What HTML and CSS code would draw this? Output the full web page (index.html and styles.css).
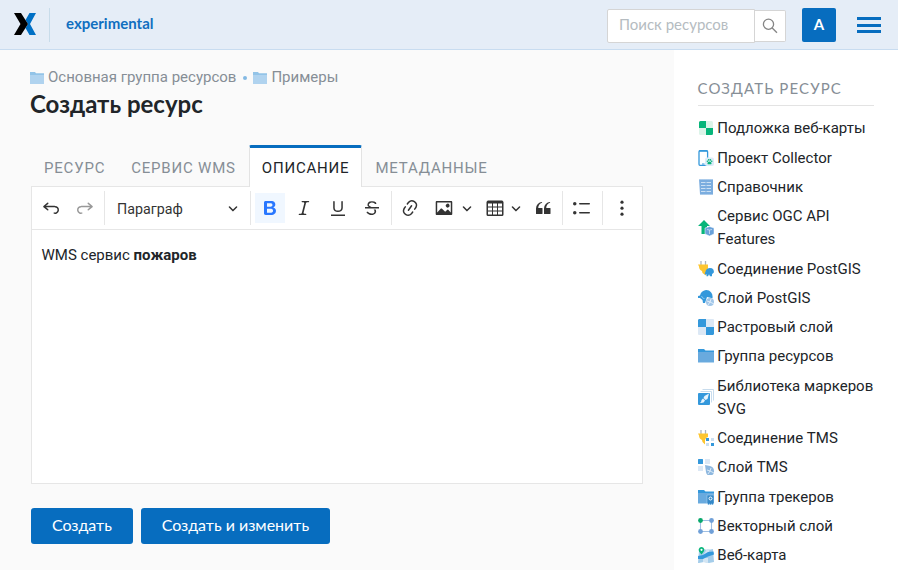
FILE: index.html
```html
<!DOCTYPE html>
<html lang="ru">
<head>
<meta charset="utf-8">
<title>Создать ресурс</title>
<link rel="stylesheet" href="styles.css">
</head>
<body>
<header class="header">
  <svg class="logo" viewBox="0 0 22 22"><path fill="#0070c5" d="M15.500 0H22L16 11l6 11h-6.500L11.500 15 14 11l-2.500-4z"/><path d="M0 0h7l7 11-7 11H0l6.500-11z"/></svg>
  <a class="site">experimental</a>
  <div class="search"><span class="search-input">Поиск ресурсов</span><span class="search-button"><svg viewBox="0 0 16 16" width="16" height="16" fill="none" stroke="#858585" stroke-width="1.300"><circle cx="6.500" cy="6.200" r="5.100"/><path d="M10.200 10l4.800 4.800"/></svg></span></div>
  <span class="avatar">A</span>
  <span class="burger"><i></i><i></i><i></i></span>
</header>
<div class="page">
  <main class="main">
    <nav class="crumbs">
      <svg viewBox="0 0 14 12"><path fill="#93c4e8" d="M0 0h5l1 1.200h8V4H0z"/><path fill="#b0d3ef" d="M0 3h14v9H0z"/></svg><span>Основная группа ресурсов</span><i class="dot"></i>
      <svg viewBox="0 0 14 12"><path fill="#93c4e8" d="M0 0h5l1 1.200h8V4H0z"/><path fill="#b0d3ef" d="M0 3h14v9H0z"/></svg><span>Примеры</span>
    </nav>
    <h1>Создать ресурс</h1>
    <div class="tabs"><span class="tab">Ресурс</span><span class="tab">Сервис WMS</span><span class="tab active">Описание</span><span class="tab">Метаданные</span></div>
    <section class="editor">
      <div class="toolbar">
        <span class="btn"><svg viewBox="0 0 20 20"><path d="m5.042 9.367 2.189 1.837a.75.75 0 0 1-.965 1.149l-3.788-3.180a.747.747 0 0 1-.210-.284.75.75 0 0 1 .170-.945L6.230 4.762a.75.75 0 1 1 .964 1.150L4.863 7.866h8.917A.75.75 0 0 1 14 7.900a4 4 0 1 1-1.477 7.718l.344-1.489a2.500 2.500 0 1 0 1.094-4.730l.008-.032H5.042z"/></svg></span>
        <span class="btn off"><svg viewBox="0 0 20 20"><path transform="matrix(-1 0 0 1 20 0)" d="m5.042 9.367 2.189 1.837a.75.75 0 0 1-.965 1.149l-3.788-3.180a.747.747 0 0 1-.210-.284.75.75 0 0 1 .170-.945L6.230 4.762a.75.75 0 1 1 .964 1.150L4.863 7.866h8.917A.75.75 0 0 1 14 7.900a4 4 0 1 1-1.477 7.718l.344-1.489a2.500 2.500 0 1 0 1.094-4.730l.008-.032H5.042z"/></svg></span>
        <i class="sep"></i>
        <span class="heading">Параграф<svg class="arrow" viewBox="0 0 10 10"><path d="M.941 4.523a.75.75 0 1 1 1.060-1.060l3.006 3.005 3.005-3.005a.75.75 0 1 1 1.060 1.060l-3.549 3.550a.75.75 0 0 1-1.168-.136L.941 4.523z"/></svg></span>
        <i class="sep"></i>
        <span class="btn on"><svg viewBox="0 0 20 20"><path d="M10.187 17H5.773c-.637 0-1.092-.138-1.364-.415-.273-.277-.409-.718-.409-1.323V4.738c0-.617.140-1.062.419-1.332.279-.270.730-.406 1.354-.406h4.680c.690 0 1.288.041 1.793.124.506.083.960.242 1.360.478.341.197.644.447.906.750a3.262 3.262 0 0 1 .808 2.162c0 1.401-.722 2.426-2.167 3.075C15.050 10.175 16 11.315 16 13.010a3.756 3.756 0 0 1-2.296 3.504 6.100 6.100 0 0 1-1.517.377c-.571.073-1.238.110-2 .110zm-.217-6.217H7v4.087h3.069c1.977 0 2.965-.690 2.965-2.072 0-.707-.256-1.220-.768-1.537-.512-.319-1.277-.478-2.296-.478zM7 5.130v3.619h2.606c.729 0 1.292-.067 1.690-.200a1.600 1.600 0 0 0 .910-.765c.165-.267.247-.566.247-.897 0-.707-.260-1.176-.778-1.409-.519-.232-1.310-.348-2.375-.348H7z"/></svg></span>
        <span class="btn"><svg viewBox="0 0 20 20"><path d="m9.586 14.633.021.004c-.036.335.095.655.393.962.082.083.173.150.274.201h1.474a.6.6 0 1 1 0 1.200H5.304a.6.6 0 0 1 0-1.200h1.150c.474-.070.809-.182 1.005-.334.157-.122.291-.320.404-.597l2.416-9.550a1.053 1.053 0 0 0-.281-.823 1.120 1.120 0 0 0-.442-.296H8.150a.6.6 0 0 1 0-1.200h6.443a.6.6 0 1 1 0 1.200h-1.195c-.376.056-.650.155-.823.296-.215.175-.423.439-.623.790l-2.366 9.347z"/></svg></span>
        <span class="btn"><svg viewBox="0 0 20 20"><path d="M3 18v-1.500h14V18zM5.200 10V3.600c0-.4.4-.6.8-.6.3 0 .7.2.7.6v6.200c0 2 1.300 2.800 3.200 2.800 1.900 0 3.400-.9 3.400-2.900V3.600c0-.3.4-.5.8-.5.3 0 .7.2.7.5V10c0 2.700-2.200 4-4.900 4-2.600 0-4.700-1.200-4.700-4z"/></svg></span>
        <span class="btn"><svg viewBox="0 0 20 20"><path d="M7 16.400c-.8-.4-1.500-.9-2.200-1.500a.6.6 0 0 1-.2-.5l.3-.6h1c1 1.200 2.100 1.700 3.700 1.700 1 0 1.800-.3 2.300-.6.6-.4.6-1.200.6-1.300.2-1.200-.9-2.100-.9-2.100h2.100c.3.7.4 1.200.4 1.700v.8l-.6 1.200c-.6.8-1.100 1-1.600 1.200a6 6 0 0 1-2.400.6c-1 0-1.800-.3-2.500-.6zM6.800 9L6 8.300c-.4-.5-.5-.8-.5-1.600 0-.7.1-1.300.5-1.800.4-.6 1-1 1.600-1.300a6.300 6.300 0 0 1 4.700 0 4 4 0 0 1 1.700 1l.3.7c0 .1.2.4-.2.7-.4.2-.9.1-1 0a3 3 0 0 0-1.200-1c-.4-.2-1-.3-2-.4-.7 0-1.400.2-2 .6-.8.6-1 .8-1 1.500 0 .8.5 1 1.200 1.500.6.4 1.100.7 1.900 1H6.800zM3 10.500V9h14v1.500z"/></svg></span>
        <i class="sep"></i>
        <span class="btn link"><svg viewBox="0 0 20 20"><path d="m11.077 15 .991-1.416a.75.75 0 1 1 1.229.860l-1.148 1.640a.748.748 0 0 1-.217.206 5.251 5.251 0 0 1-8.503-5.955.741.741 0 0 1 .120-.274l1.147-1.639a.75.75 0 1 1 1.228.860L4.933 10.700l.006.003a3.750 3.750 0 0 0 6.132 4.294l.006.004zm5.494-5.335a.748.748 0 0 1-.120.274l-1.147 1.639a.75.75 0 1 1-1.228-.860l.860-1.230a3.750 3.750 0 0 0-6.144-4.301l-.860 1.229a.75.75 0 0 1-1.229-.860l1.148-1.640a.748.748 0 0 1 .217-.206 5.251 5.251 0 0 1 8.503 5.955zm-4.563-2.532a.75.75 0 0 1 .184 1.045l-3.155 4.505a.75.75 0 1 1-1.229-.860l3.155-4.506a.75.75 0 0 1 1.045-.184z"/></svg></span>
        <span class="split image"><span class="btn"><svg viewBox="0 0 20 20"><path d="M6.910 10.540c.260-.230.640-.210.880.030l3.360 3.140 2.230-2.060a.64.64 0 0 1 .870 0l2.520 2.970V4.500H3.200v10.120l3.710-4.080zm10.270-7.510c.6 0 1.090.470 1.090 1.050v11.840c0 .590-.490 1.060-1.090 1.060H2.790c-.6 0-1.090-.470-1.090-1.060V4.080c0-.580.490-1.050 1.100-1.050h14.380zm-5.220 5.560a1.960 1.960 0 1 1 3.400-1.960 1.960 1.960 0 0 1-3.400 1.960z"/></svg></span><svg class="arrow" viewBox="0 0 10 10"><path d="M.941 4.523a.75.75 0 1 1 1.060-1.060l3.006 3.005 3.005-3.005a.75.75 0 1 1 1.060 1.060l-3.549 3.550a.75.75 0 0 1-1.168-.136L.941 4.523z"/></svg></span>
        <span class="split"><span class="btn"><svg viewBox="0 0 20 20"><path d="M3 5.500v3h4v-3H3zm0 4v3h4v-3H3zm0 4v3h4v-3H3zm5 3h4v-3H8v3zm5 0h4v-3h-4v3zm4-4v-3h-4v3h4zm0-4v-3h-4v3h4zm1.500 8a1.500 1.500 0 0 1-1.500 1.500H3A1.500 1.500 0 0 1 1.500 16.500V4c.222-.863 1.068-1.500 2-1.500h13c.932 0 1.778.637 2 1.500v12.500zM12 12.500v-3H8v3h4zm0-4v-3H8v3h4z"/></svg></span><svg class="arrow" viewBox="0 0 10 10"><path d="M.941 4.523a.75.75 0 1 1 1.060-1.060l3.006 3.005 3.005-3.005a.75.75 0 1 1 1.060 1.060l-3.549 3.550a.75.75 0 0 1-1.168-.136L.941 4.523z"/></svg></span>
        <span class="btn"><svg viewBox="0 0 20 20"><path d="M3 10.423a6.500 6.500 0 0 1 6.056-6.408l.038.670C6.448 5.423 5.354 7.663 5.220 10H9c.552 0 .5.432.5.986v4.511c0 .554-.448.503-1 .503h-5c-.552 0-.5-.449-.5-1.003v-4.574zm8 0a6.500 6.500 0 0 1 6.056-6.408l.038.670c-2.646.739-3.740 2.979-3.873 5.315H17c.552 0 .5.432.5.986v4.511c0 .554-.448.503-1 .503h-5c-.552 0-.5-.449-.5-1.003v-4.574z"/></svg></span>
        <i class="sep"></i>
        <span class="btn"><svg viewBox="0 0 20 20"><path d="M7 5.750c0 .414.336.750.750.750h9.500a.75.75 0 1 0 0-1.500h-9.500a.75.75 0 0 0-.750.750zM7 14.750c0 .414.336.750.750.750h9.500a.75.75 0 1 0 0-1.500h-9.500a.75.75 0 0 0-.750.750z"/><circle cx="2.750" cy="5.750" r="1.750"/><circle cx="2.750" cy="14.750" r="1.750"/></svg></span>
        <i class="sep last"></i>
        <span class="btn"><svg viewBox="0 0 20 20"><circle cx="10" cy="4.200" r="1.600"/><circle cx="10" cy="10.200" r="1.600"/><circle cx="10" cy="16.200" r="1.600"/></svg></span>
      </div>
      <div class="content">WMS сервис <b>пожаров</b></div>
    </section>
    <div class="actions"><span class="primary">Создать</span><span class="primary">Создать и изменить</span></div>
  </main>
  <aside class="side">
    <h2>Создать ресурс</h2>
    <ul>
      <li><svg viewBox="0 0 16 16"><rect x="1" y="1" width="14" height="14" rx="1.500" fill="#dcf4e9"/><path fill="#07b57a" d="M2.500 1H8v7H1V2.500Q1 1 2.500 1zM8 8h7v5.500q0 1.500-1.500 1.500H8z"/></svg>Подложка веб-карты</li>
      <li><svg viewBox="0 0 16 16"><rect x="1" y=".7" width="8.600" height="14.600" rx="1" fill="#fff" stroke="#3498db" stroke-width="1.300"/><path stroke="#3498db" stroke-width="1.500" d="M1 1h8.500"/><path stroke="#3498db" d="M4 14h2.500"/><rect x="7" y="7.500" width="9" height="8.500" rx="2" fill="#dcebf8"/><g fill="#07b57a"><path d="M11.500 11.500c1.300 0 2.300 1.500 2 2.300-.3.900-1.200.4-2 .4s-1.700.5-2-.4c-.3-.8.7-2.300 2-2.300z"/><circle cx="9.400" cy="11.200" r=".8"/><circle cx="10.700" cy="9.900" r=".8"/><circle cx="12.400" cy="9.900" r=".8"/><circle cx="13.700" cy="11.200" r=".8"/></g></svg>Проект Collector</li>
      <li><svg viewBox="0 0 16 16"><path fill="#7baddf" d="M1 0l1 .8L3 0l1 .8L5 0l1 .8L7 0l1 .8L9 0l1 .8L11 0l1 .8L13 0l1 .8 1-.8v16l-1-.8-1 .8-1-.8-1 .8-1-.8-1 .8-1-.8-1 .8-1-.8-1 .8-1-.8-1 .8-1-.8z"/><path stroke="#d5e5f6" stroke-width=".9" d="M3 3.500h4.500M8.500 3.500H13M3 6.500h4.500M8.500 6.500H13M3 9.500h4.500M8.500 9.500H13M3 12.500h4.500M8.500 12.500H13"/></svg>Справочник</li>
      <li><svg viewBox="0 0 16 16"><path fill="#07b57a" d="M6 0l6 6H9v8H3.500V6H0z"/><path fill="#69a1d9" stroke="#fff" stroke-width=".5" d="M7 8l4.500-1.500L16 8v6l-4.500 2L7 14z"/><path stroke="#cfe1f4" stroke-width=".8" fill="none" d="M9 9.500l2.500.5 2.500-.5M11.500 10v4"/></svg>Сервис OGC API Features</li>
      <li><svg viewBox="0 0 16 16"><path stroke="#adb5bd" stroke-width="1.300" d="M3 0v4M7.500 0v4"/><path fill="#fdc52f" d="M0 3.500h10V7q0 2-2 3v4.500L4.500 12 4 10Q1 8.500 1 5.500z"/><path fill="#3498db" d="M6.500 13.500L8 9q2-3 6-1.700 2 1 2 4l-2 2v2h-2l-1-2-1 2H8.500v-2z"/></svg>Соединение PostGIS</li>
      <li><svg viewBox="0 0 16 16"><path fill="#3498db" d="M0 6l2-.5Q3 1 7 .2q4-.5 6 2 2 2 1.500 6L9 7 7 13H5l-.5-3L2 8H0z"/><path stroke="#8bc5ed" fill="none" d="M3.500 6q1 3 3 2.500"/><circle cx="12" cy="12" r="4" fill="#a1c6e8"/><path stroke="#eef5fc" fill="none" stroke-width=".8" d="M9 11l3 1 1-3M10 15l2-3 4 2"/></svg>Слой PostGIS</li>
      <li><svg viewBox="0 0 16 16"><rect width="16" height="16" rx="1" fill="#dce8f5"/><path fill="#3498db" d="M1 0h7v8H0V1zM8 8h8v7l-1 1H8z"/></svg>Растровый слой</li>
      <li><svg viewBox="0 0 16 16"><path fill="#3498db" d="M0 1h6l1.500 1.500H16v3H0z"/><path fill="#69aade" d="M0 4h16v10.500H0z"/></svg>Группа ресурсов</li>
      <li><svg viewBox="0 0 16 16"><path fill="none" stroke="#c8dced" d="M4.500.5h11v11M2.500 2.500h11v11"/><rect y="4" width="12" height="12" rx="1" fill="#3498db"/><path fill="#e8f4fd" d="M11 4.500L9.500 10l-2 1-2-2 1-2zM5 9.500l2 2q-1 3-5 2.500 1.500-1 1.500-3z"/></svg>Библиотека маркеров SVG</li>
      <li><svg viewBox="0 0 16 16"><path stroke="#adb5bd" stroke-width="1.300" d="M3 0v4M7.500 0v4"/><path fill="#fdc52f" d="M0 3.500h10V7q-2 0-3 3v4.500L4.500 12 4 10Q1 8.500 1 5.500z"/><path fill="#3498db" d="M8 8h3v3H8zM13 13h3v3h-3z"/><path fill="#cbdff1" d="M13 8h3v3h-3zM8 13h3v3H8z"/></svg>Соединение TMS</li>
      <li><svg viewBox="0 0 16 16"><rect width="5" height="5" rx=".5" fill="#3498db"/><path fill="#dce8f5" d="M7 0h5v5H7zM0 7h5v5H0z"/><path fill="#8eb8df" d="M7 6l5 1q4 1 4 5a4 4 0 0 1-8 1z"/><path stroke="#eef5fc" fill="none" stroke-width=".8" d="M9 11l3 1 1-3M10 15l2-3 4 2"/></svg>Слой TMS</li>
      <li><svg viewBox="0 0 16 16"><path fill="#3498db" d="M0 1h6l1.500 1.500H16v3H0z"/><path fill="#69aade" d="M0 4h16v10.500H0z"/><path fill="#3488c8" stroke="#a9d0ef" stroke-width=".6" d="M9 6h7v8l-1 1v1h-1v-1h-1v1h-1v-1h-1v1h-1v-1l-1-1z"/><circle cx="12.500" cy="9.500" r="1.500" fill="none" stroke="#fff"/></svg>Группа трекеров</li>
      <li><svg viewBox="0 0 16 16"><path fill="none" stroke="#9fbfe3" stroke-width="1.100" d="M2.500 2.500h11v11h-11z"/><circle cx="2.500" cy="2.500" r="2.400" fill="#07a86b"/><g fill="#70a0d8"><circle cx="13.500" cy="2.500" r="2.400"/><circle cx="2.500" cy="13.500" r="2.400"/><circle cx="13.500" cy="13.500" r="2.400"/></g></svg>Векторный слой</li>
      <li><svg viewBox="0 0 16 16"><path fill="#a4cdea" d="M1 3l4-1 5 1 5-1 1 13-5 1-5-1-5 1H0z"/><path fill="#d3e5f3" d="M9 2h3l-2 5-4 2V7zM5 11h5v5l-5-1z"/><path fill="#3498db" d="M0 9l5-1 5-3 5.500-.5.5 3-6 2-5 2.500H0z"/><path fill="#07b57a" d="M3.500 7.500Q0 4 .8 2 1.500 0 3.500 0t2.700 2q.5 2-2.700 5.500z"/><circle cx="3.500" cy="2.800" r="1.100" fill="#fff"/></svg>Веб-карта</li>
    </ul>
  </aside>
</div>
</body>
</html>
```
FILE: styles.css
```css
* { box-sizing: border-box; }
body { margin: 0; height: 570px; overflow: hidden; display: flex; flex-direction: column; background: #fafafa; color: #212529; font: 15px/23.25px Roboto, sans-serif; }
.header { height: 50px; flex: none; display: flex; align-items: center; background: #e5edf7; border-bottom: 1px solid #c8dcf0; padding: 0 17px 0 14px; font-family: Lato, Carlito, sans-serif; }
.logo { width: 22px; height: 22px; margin-top: -1px; }
.site { height: 34px; margin-left: 13px; padding-left: 16px; border-left: 1px solid #c8dcea; color: #106fc0; font-size: 15px; font-weight: 700; line-height: 31px; }
.search { display: flex; align-items: center; margin-left: auto; margin-top: 3px; }
.search-input { width: 148px; height: 34px; border: 1px solid #d5d5d5; border-radius: 2px 0 0 2px; background: #fff; color: #b5bcc1; padding-left: 11px; font-size: 15px; line-height: 29px; }
.search-button { width: 31px; height: 32px; display: flex; align-items: center; justify-content: center; border: 1px solid #d5d5d5; border-left: 0; border-radius: 0 2px 2px 0; background: #fff; }
.avatar { width: 34px; height: 34px; margin-left: 16px; border-radius: 2px; background: #076dbf; color: #fff; font-size: 15px; font-weight: 700; line-height: 33px; text-align: center; }
.burger { width: 24px; display: grid; gap: 3.5px; margin: 1px 0 0 21px; }
.burger i { height: 3px; background: #076dbf; }
.page { flex: 1; min-height: 0; display: flex; }
.main { width: 674px; padding: 16px 31px 0 30px; }
.crumbs { display: flex; align-items: center; height: 23px; color: #868e96; }
.crumbs svg { width: 14px; height: 12px; margin-right: 4px; }
.dot { width: 4px; height: 4px; margin: 0 6px 0 7px; border-radius: 50%; background: #83b9e3; }
h1 { margin: 0; font: 700 24px/30px Lato, Carlito, sans-serif; }
.tabs { display: flex; margin: 26px 0 -1px 1px; height: 42px; position: relative; }
.tab { height: 42px; padding: 3px 13px 0; color: #868e96; font-size: 15px; line-height: 40px; letter-spacing: .8px; text-transform: uppercase; }
.active { padding: 0 12px; border: 1px solid #e3e3e3; border-top: 3px solid #076dbf; border-bottom: 0; border-radius: 2px 2px 0 0; background: #fff; color: #212529; }
.editor { margin-left: 1px; height: 298px; border: 1px solid #e6e6e6; background: #fff; }
.toolbar { display: flex; align-items: center; gap: 4px; height: 43px; padding: 0 5px 0 4px; border-bottom: 1px solid #e6e6e6; }
.btn { flex: none; display: flex; align-items: center; justify-content: center; width: 30px; height: 30px; }
.btn svg { width: 20px; height: 20px; }
.toolbar svg { fill: #333; }
.toolbar .off svg { fill: #999; }
.toolbar .on { background: #f0f7ff; }
.toolbar .on svg { fill: #2977ff; }
.sep { flex: none; width: 1px; height: 34px; background: #e6e6e6; }
.last { margin-left: auto; }
.heading { flex: none; width: 137px; display: flex; align-items: center; justify-content: space-between; padding: 3px 8px 0; font-size: 14.250px; color: #333; }
.heading .arrow { margin-top: -3px; }
.arrow { width: 10px; height: 10px; }
.link { margin-left: -1px; }
.split { flex: none; width: 44px; display: flex; align-items: center; }
.image { width: 47px; }
.split .arrow { margin-left: 1px; }
.image .arrow { margin-left: 3px; }
.content { padding: 14px 9.500px; }
.actions { display: flex; gap: 8px; margin: 24px 0 0 1px; }
.primary { height: 36px; padding: 0 20.900px; border-radius: 3px; background: #076dbf; color: #fff; font: 16px/34px Lato, Carlito, sans-serif; }
.side { flex: 1; background: #fff; padding: 22px 24px 0 23.500px; }
h2 { margin: 0 0 8.300px; height: 34px; border-bottom: 1px solid #e3e3e3; color: #868e96; font: 15px/32px Lato, Carlito, sans-serif; letter-spacing: 1.120px; text-transform: uppercase; }
ul { margin: 0 -5px 0 0; padding: 0; list-style: none; }
li { display: flex; align-items: center; gap: 3.800px; padding: 3px 0; }
li svg { flex: none; width: 16px; height: 16px; margin-top: -1px; }
```
